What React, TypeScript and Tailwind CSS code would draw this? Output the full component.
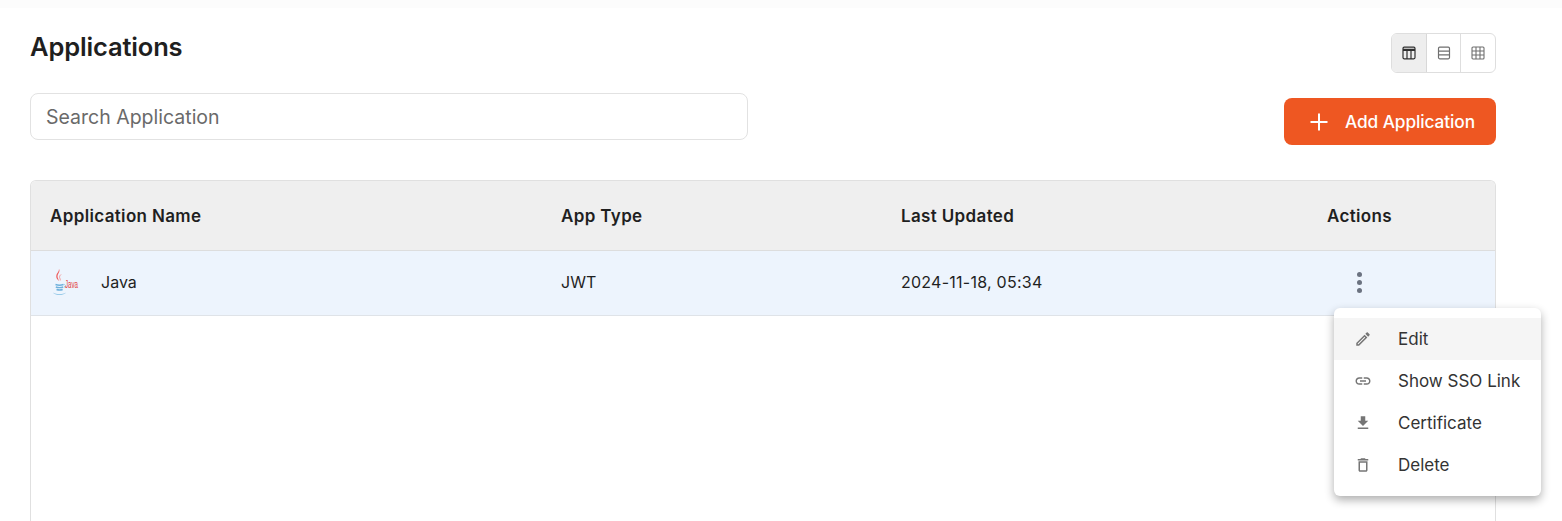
import React from "react";

const font = { fontFamily: '"Inter", "Liberation Sans", sans-serif' };

function MIcon({ d, className = "" }: { d: string; className?: string }) {
  return (
    <svg viewBox="0 0 24 24" className={`w-[18px] h-[18px] fill-[#757575] ${className}`}>
      <path d={d} />
    </svg>
  );
}

function JavaLogo() {
  return (
    <svg viewBox="0 0 32 32" className="w-8 h-8 shrink-0 overflow-visible">
      <path d="M9 3c1.800 3-2.200 5-1.300 8.500.3 1.200 1 2.200 1.300 3.500-1.800-1.500-3.300-3.200-2.600-6C6.900 7 9.200 5.500 9 3z" fill="#ee5f5f" />
      <path d="M11 8.500c-1.500 1.200-1.800 2.600-1 4.200.3.600.4 1.200.2 1.800" fill="none" stroke="#f28c8c" strokeWidth="0.900" />
      <path d="M5.500 18.500c2 .7 6 .7 8 0M5.800 21c2 .7 5.500.7 7.400 0M6.500 23.500c1.800.6 4.500.6 6.200 0" stroke="#6fb1dc" strokeWidth="1.400" fill="none" />
      <path d="M3 26.500c3 2 10 2 13 0-1.500 3-11.500 3.200-13 0z" fill="#7fbde2" />
      <path d="M13.500 18.500c2-.5 2.800 1.800.5 3" stroke="#8cc4e6" strokeWidth="0.800" fill="none" />
      <text x="15" y="22" fontSize="10" fill="#e23b3b" textLength="13" lengthAdjust="spacingAndGlyphs" style={{ fontFamily: '"Liberation Sans", sans-serif' }}>Java</text>
    </svg>
  );
}

function ViewLayout() {
  return (
    <svg viewBox="0 0 14 14" className="w-[14px] h-[14px]" fill="none" stroke="#2f2f2f" strokeWidth="1.200">
      <rect x="1" y="1.200" width="12" height="11.600" rx="1.200" />
      <path d="M1 3.900h12" strokeWidth="2.200" />
      <path d="M5 5v8M9 5v8" />
    </svg>
  );
}
function ViewRows() {
  return (
    <svg viewBox="0 0 14 14" className="w-[14px] h-[14px]" fill="none" stroke="#6f6f6f" strokeWidth="1.200">
      <rect x="1.500" y="1.200" width="11" height="11.600" rx="1.200" />
      <path d="M1.500 5.200h11M1.500 8.800h11" />
    </svg>
  );
}
function ViewGrid() {
  return (
    <svg viewBox="0 0 14 14" className="w-[14px] h-[14px]" fill="none" stroke="#6f6f6f" strokeWidth="1.100">
      <rect x="1" y="1" width="12" height="12" rx="1" />
      <path d="M5 1v12M9 1v12M1 5h12M1 9h12" />
    </svg>
  );
}

const menu = [
  { label: "Edit", active: true, d: "M3 17.250V21h3.750L17.810 9.940l-3.750-3.750L3 17.250zM5.920 19H5v-.920l9.060-9.060.920.920L5.920 19zM20.710 5.630l-2.340-2.340c-.200-.200-.450-.290-.710-.290s-.510.100-.700.290l-1.830 1.830 3.750 3.750 1.830-1.830c.390-.390.390-1.020 0-1.410z" },
  { label: "Show SSO Link", d: "M3.900 12c0-1.710 1.390-3.100 3.100-3.100h4V7H7c-2.760 0-5 2.240-5 5s2.240 5 5 5h4v-1.900H7c-1.710 0-3.100-1.390-3.100-3.100zM8 13h8v-2H8v2zm9-6h-4v1.900h4c1.710 0 3.100 1.390 3.100 3.100s-1.390 3.100-3.100 3.100h-4V17h4c2.760 0 5-2.240 5-5s-2.240-5-5-5z" },
  { label: "Certificate", d: "M19 9h-4V3H9v6H5l7 7 7-7zM5 18v2h14v-2H5z" },
  { label: "Delete", d: "M6 19c0 1.100.900 2 2 2h8c1.100 0 2-.900 2-2V7H6v12zM8 9h8v10H8V9zm7.500-5l-1-1h-5l-1 1H5v2h14V4z" },
];

export default function App() {
  return (
    <div style={font} className="relative h-[521px] w-[1562px] overflow-hidden bg-white text-[#1f1f1f]">
      <div className="h-[8px] bg-[#fcfcfc]" />
      <div className="pl-[30px] pr-[66px] pt-[25px]">
        <div className="flex items-start justify-between h-[60px]">
          <h1 className="text-[25.500px] leading-[28px] font-semibold tracking-[-0.15px]">Applications</h1>
          <div className="flex h-[40px] w-[105px] rounded-[6px] border border-[#dedede] overflow-hidden">
            <button className="flex-1 flex items-center justify-center bg-[#eeeeee] border-r border-[#d8d8d8]"><ViewLayout /></button>
            <button className="flex-1 flex items-center justify-center border-r border-[#dedede]"><ViewRows /></button>
            <button className="flex-1 flex items-center justify-center"><ViewGrid /></button>
          </div>
        </div>
        <div className="flex items-start justify-between h-[87px]">
          <div className="w-[718px] h-[47px] rounded-[8px] border border-[#e2e2e2] pl-[15px] pt-[3px] flex items-center text-[19.500px] text-[#6a6a6a]">Search Application</div>
          <button className="mt-[5px] w-[212px] h-[47px] rounded-[8px] bg-[#ee5722] text-white flex items-center pl-[25px] gap-[16px] text-[17.300px] font-medium tracking-[-0.1px]">
            <svg viewBox="0 0 20 20" className="w-[20px] h-[20px]" stroke="white" strokeWidth="2"><path d="M10 1.500v17M1.500 10h17" /></svg>
            Add Application
          </button>
        </div>
        <div className="rounded-t-[6px] border border-b-0 border-[#e0e0e0] h-[341px] overflow-hidden">
          <div className="grid grid-cols-[511px_340px_426px_1fr] h-[70px] items-center bg-[#efefef] border-b border-[#dddddd] pl-[19px] pt-[2px] text-[17px] font-semibold tracking-[0.35px]">
            <div>Application Name</div>
            <div>App Type</div>
            <div>Last Updated</div>
            <div>Actions</div>
          </div>
          <div className="grid grid-cols-[511px_340px_426px_1fr] h-[65px] items-center bg-[#edf4fd] border-b border-[#dfe3e8] pl-[19px] pb-[2px] text-[16px]">
            <div className="flex items-center gap-[19px]"><JavaLogo /><span>Java</span></div>
            <div>JWT</div>
            <div className="tracking-[0.25px]">2024-11-18, 05:34</div>
            <div className="pl-[24px]">
              <div className="flex flex-col gap-[3px] w-[16px] items-center">
                <span className="w-[5px] h-[5px] rounded-full bg-[#6b7280]" />
                <span className="w-[5px] h-[5px] rounded-full bg-[#6b7280]" />
                <span className="w-[5px] h-[5px] rounded-full bg-[#6b7280]" />
              </div>
            </div>
          </div>
        </div>
      </div>
      <div className="absolute left-[1334px] top-[308px] w-[207px] h-[188px] rounded-[6px] bg-white py-[10px] shadow-[0_4px_10px_rgba(0,0,0,0.32)]">
        {menu.map((m) => (
          <div key={m.label} className={`flex items-center h-[42px] pl-[20px] text-[17px] text-[#333333] ${m.active ? "bg-[#f5f5f5]" : ""}`}>
            <MIcon d={m.d} className="mr-[26px]" />
            <span className="pt-[2px]">{m.label}</span>
          </div>
        ))}
      </div>
    </div>
  );
}
